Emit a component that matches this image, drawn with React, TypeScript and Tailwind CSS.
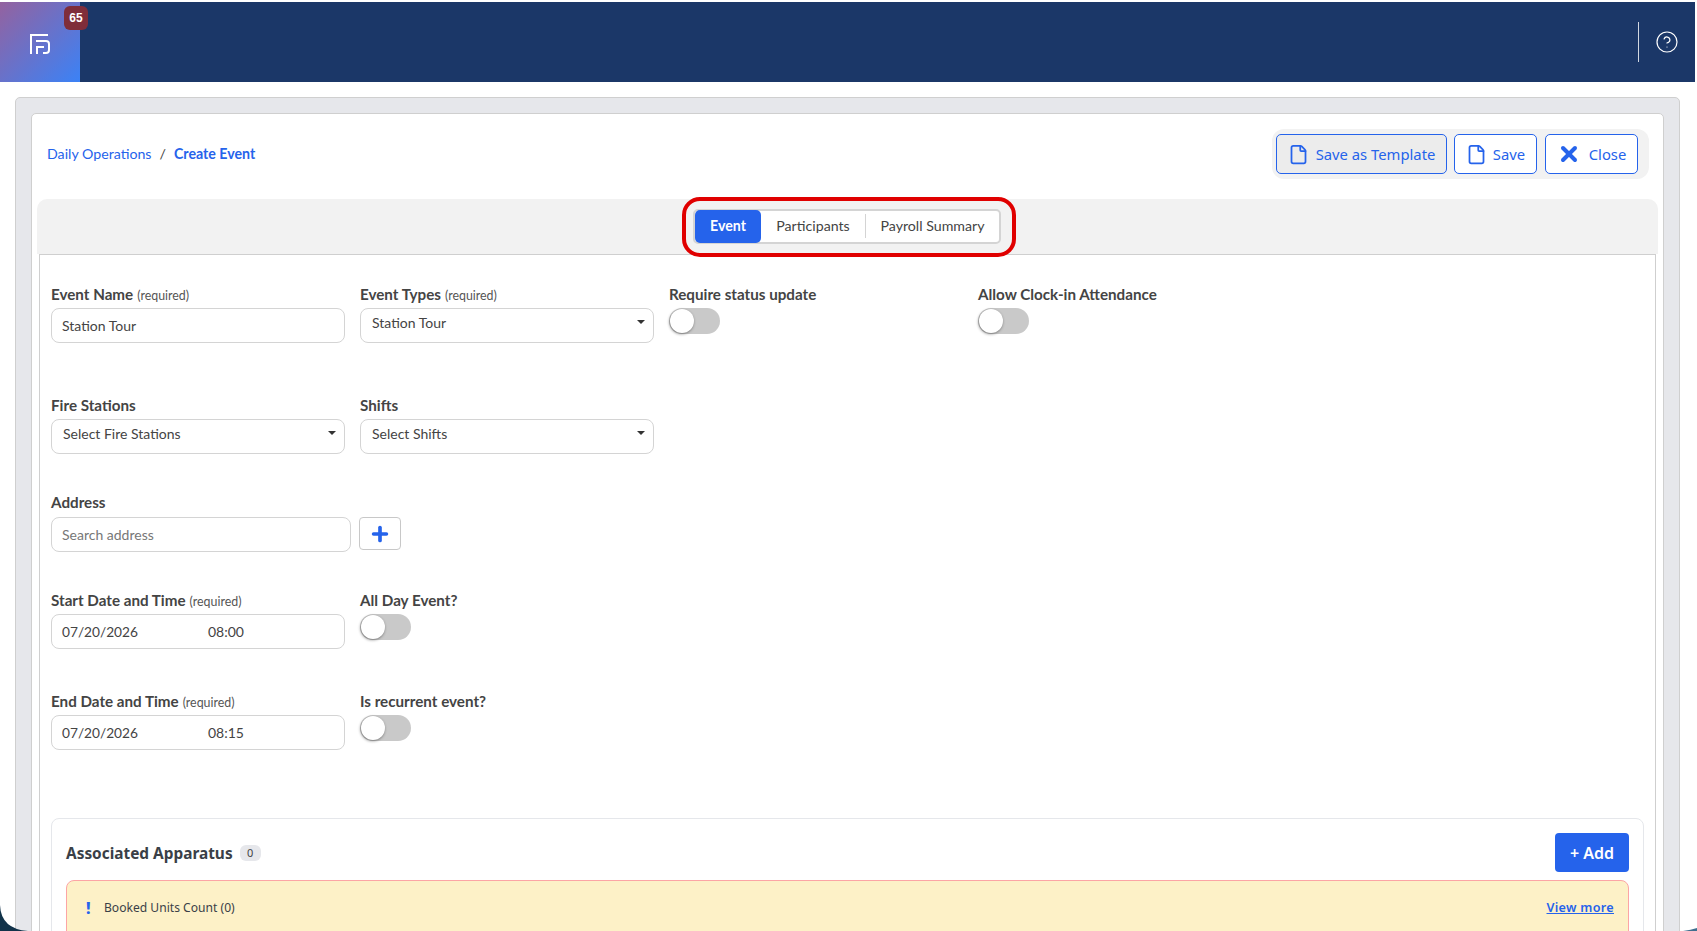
import type { ReactNode } from "react";
import { File, HelpCircle, X, Plus } from "lucide-react";

const lato = "font-['Lato',sans-serif]";

function Logo() {
	return (
		<svg width="22" height="22" viewBox="0 0 22 22" fill="none" stroke="white" strokeWidth="2">
			<path d="M2 21V2H19" />
			<path d="M7 8H17Q20 8 20 11V17Q20 20 17 20H14" />
			<path d="M8 21V14H15" />
		</svg>
	);
}

function Label({ text, hint }: { text: string; hint?: string }) {
	return (
		<div className="h-[24px] leading-[20px] text-[15.2px] font-bold text-[#444] whitespace-nowrap">
			{text}
			{hint && <span className="ml-[4px] text-[12.4px] font-normal text-[#555]">{hint}</span>}
		</div>
	);
}

function TextBox({ value, placeholder, width = "w-[294px]" }: { value?: string; placeholder?: boolean; width?: string }) {
	return (
		<div className={`${width} h-[35px] flex items-center px-[10px] border border-[#d4d4d4] rounded-[8px] bg-white text-[14px] ${placeholder ? "text-[#777]" : "text-[#444]"}`}>
			{value}
		</div>
	);
}

function SelectBox({ value, raised }: { value: string; raised?: boolean }) {
	return (
		<div className={`w-[294px] h-[35px] flex items-center justify-between pl-[11px] pr-[8px] border border-[#d4d4d4] rounded-[8px] bg-white text-[14px] text-[#444] ${raised ? "pb-[7px]" : "pb-[7px]"}`}>
			<span>{value}</span>
			<span className="w-0 h-0 border-x-[4px] border-x-transparent border-t-[4px] border-t-[#333]" />
		</div>
	);
}

function DateBox({ date, time }: { date: string; time: string }) {
	return (
		<div className="w-[294px] h-[35px] flex items-center px-[10px] border border-[#d4d4d4] rounded-[8px] bg-white text-[14px] text-[#444]">
			<span className="w-[146px] pt-[1px] text-[13.7px]">{date}</span>
			<span>{time}</span>
		</div>
	);
}

function Toggle() {
	return (
		<div className="w-[51px] h-[26px] rounded-full bg-[#c9c9c9] flex items-center pl-[1px]">
			<div className="w-[24px] h-[24px] rounded-full bg-white shadow-[-0.5px_1px_3px_rgba(0,0,0,0.45)]" />
		</div>
	);
}

function ActionButton({ label, icon, active, width }: { label: string; icon: ReactNode; active?: boolean; width: string }) {
	return (
		<button className={`${width} h-[40px] flex items-center justify-center border border-[#2563eb] rounded-[5px] text-[#2563eb] text-[14.8px] font-['Noto_Sans',sans-serif] ${active ? "bg-[#ececec]" : "bg-white"}`}>
			{icon}
			{label}
		</button>
	);
}

export default function App() {
	return (
		<div className={`${lato} w-[1697px] h-[931px] overflow-hidden bg-white relative`}>
			<div className="mt-[2px] mr-[2px] h-[80px] bg-[#1b3768] flex items-center justify-between relative">
				<div className="w-[80px] h-[80px] bg-[linear-gradient(135deg,#94629f_0%,#3b82f6_100%)] flex items-center justify-center pt-[4px] relative">
					<Logo />
					<span className="absolute left-[64px] top-[4px] w-[24px] h-[24px] rounded-[6px] bg-[#7f2d3a] text-white text-[12px] font-bold font-['Liberation_Sans',sans-serif] flex items-center justify-center">
						65
					</span>
				</div>
				<div className="flex items-center h-[40px] mr-[16px]">
					<div className="w-px h-[40px] bg-white/80 mr-[16px]" />
					<HelpCircle size={24} strokeWidth={1.2} color="white" />
				</div>
			</div>

			<div className="mt-[15px] ml-[15px] w-[1665px] h-[900px] rounded-[5px] border border-[#cfcfcf] bg-[#e6e7eb] pt-[15px] pl-[15px]">
				<div className="w-[1633px] h-[900px] bg-white rounded-[5px] border border-[#cfcfcf] px-[5px]">
					<div className="flex items-center justify-between h-[85px] pb-[5px] pl-[10px] pr-[9px]">
						<div className="flex items-center text-[14.2px] text-[#2563eb]">
							<span>Daily Operations</span>
							<span className="mx-[8px] text-[#444]">/</span>
							<span className="font-bold">Create Event</span>
						</div>
						<div className="w-[377px] h-[50px] bg-[#f2f2f2] rounded-[12px] flex items-center gap-[7px] pl-[4px]">
							<ActionButton width="w-[171px]" active label="Save as Template" icon={<File size={21} strokeWidth={2} className="mr-[7px]" />} />
							<ActionButton width="w-[83px]" label="Save" icon={<File size={21} strokeWidth={2} className="mr-[6px]" />} />
							<div className="ml-[1px]">
								<ActionButton width="w-[93px]" label="Close" icon={<X size={24} strokeWidth={4} className="mr-[8px]" />} />
							</div>
						</div>
					</div>

					<div className="h-[55px] bg-[#f2f2f2] rounded-t-[10px] flex justify-center items-center relative">
						<div className="flex items-center h-[35px] w-[308px] mr-[1px] mb-[1px] border-2 border-[#d4d4d4] rounded-[5px] bg-white text-[14.2px] text-[#444]">
							<span className="w-[66px] h-[33px] flex items-center justify-center bg-[#2563eb] text-white font-bold rounded-[5px]">Event</span>
							<span className="w-[104px] text-center">Participants</span>
							<span className="flex-1 text-center border-l border-[#d4d4d4] leading-[24px]">Payroll Summary</span>
						</div>
						<div className="absolute left-[645px] top-[-2px] w-[334px] h-[60px] border-[4px] border-[#e00000] rounded-[18px] pointer-events-none" />
					</div>

					<div className="mx-[2px] border border-[#cfcfcf] h-[700px] px-[11px] pt-[29px]">
						<div className="flex gap-[15px]">
							<div>
								<Label text="Event Name" hint="(required)" />
								<TextBox value="Station Tour" />
							</div>
							<div>
								<Label text="Event Types" hint="(required)" />
								<SelectBox value="Station Tour" raised />
							</div>
							<div className="w-[294px]">
								<Label text="Require status update" />
								<Toggle />
							</div>
							<div>
								<Label text="Allow Clock-in Attendance" />
								<Toggle />
							</div>
						</div>

						<div className="flex gap-[15px] mt-[52px]">
							<div>
								<Label text="Fire Stations" />
								<SelectBox value="Select Fire Stations" />
							</div>
							<div>
								<Label text="Shifts" />
								<SelectBox value="Select Shifts" />
							</div>
						</div>

						<div className="mt-[38px]">
							<Label text="Address" />
							<div className="flex gap-[8px] mt-[1px]">
								<TextBox width="w-[300px]" value="Search address" placeholder />
								<div className="w-[42px] h-[33px] flex items-center justify-center border border-[#c8c8c8] rounded-[4px]">
									<Plus size={22} strokeWidth={4} color="#2563eb" />
								</div>
							</div>
						</div>

						<div className="flex gap-[15px] mt-[38px]">
							<div>
								<Label text="Start Date and Time" hint="(required)" />
								<DateBox date="07/20/2026" time="08:00" />
							</div>
							<div>
								<Label text="All Day Event?" />
								<Toggle />
							</div>
						</div>

						<div className="flex gap-[15px] mt-[42px]">
							<div>
								<Label text="End Date and Time" hint="(required)" />
								<DateBox date="07/20/2026" time="08:15" />
							</div>
							<div>
								<Label text="Is recurrent event?" />
								<Toggle />
							</div>
						</div>

						<div className="mt-[68px] border border-[#e5e7eb] rounded-[8px] h-[200px] px-[14px] pt-[14px] font-['Noto_Sans',sans-serif]">
							<div className="flex items-center justify-between h-[39px]">
								<div className="flex items-center gap-[7px] pt-[2px]">
									<span className="text-[15.4px] font-bold text-[#3a3f47]">Associated Apparatus</span>
									<span className="w-[21px] h-[16px] rounded-[6px] bg-[#e6e7eb] text-[11px] text-[#444] flex items-center justify-center">0</span>
								</div>
								<button className="w-[74px] h-[39px] bg-[#2563eb] rounded-[4px] text-white text-[16px] font-semibold">+ Add</button>
							</div>
							<div className="mt-[8px] h-[100px] border border-[#fca5a5] rounded-[8px] bg-[#fdf1c7] pl-[17px] pr-[14px] pt-[18px] flex justify-between items-start text-[12.1px] text-[#3a3f47]">
								<div className="flex items-center gap-[12px] pl-[2px]">
									<span className="w-[6px] text-[#2563eb] text-[16px] font-extrabold leading-[18px]">!</span>
									<span>Booked Units Count (0)</span>
								</div>
								<span className="text-[#2563eb] text-[12.6px] font-semibold underline tracking-[0.3px]">View more</span>
							</div>
						</div>
					</div>
				</div>
			</div>

			{/* desktop corners peeking out behind the window */}
			<svg className="absolute left-0 bottom-0" width="28" height="28" viewBox="0 0 28 28">
				<path d="M0 2Q1 26 28 28H0Z" fill="#12334a" />
			</svg>
			<svg className="absolute right-0 bottom-0" width="14" height="3" viewBox="0 0 14 3">
				<path d="M0 3Q8 2 14 0V3Z" fill="#3f6f8f" />
			</svg>
		</div>
	);
}
